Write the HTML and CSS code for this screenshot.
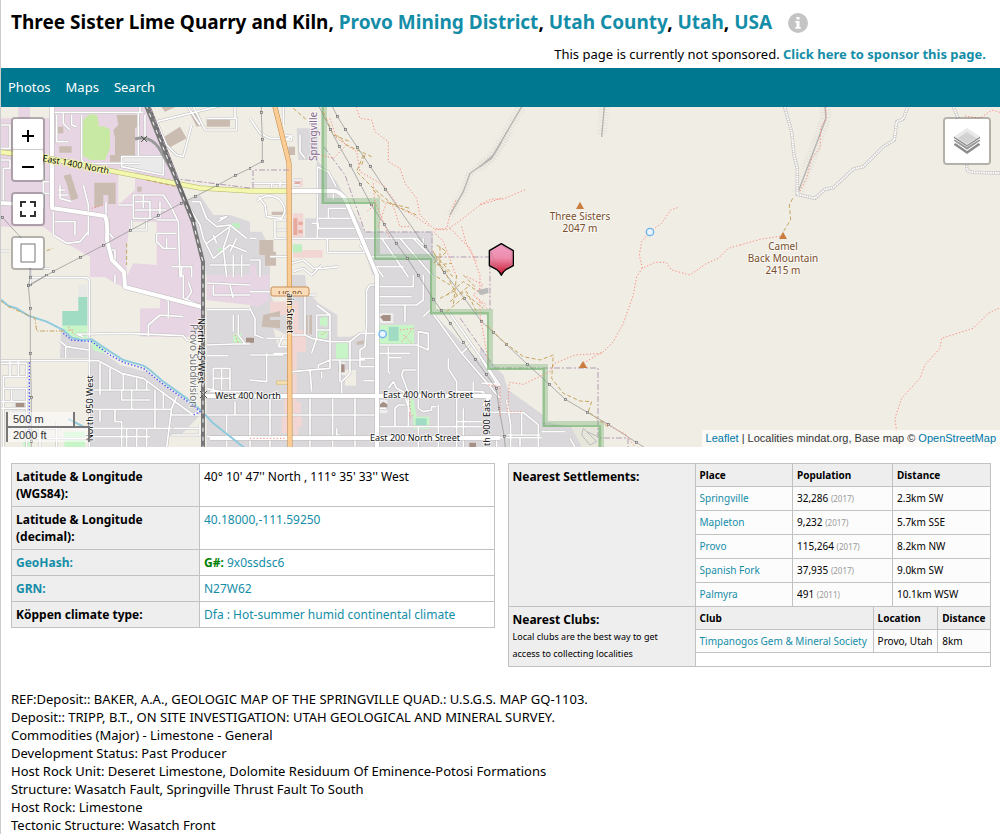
FILE: index.html
```html
<!DOCTYPE html>
<html lang="en">
<head>
<meta charset="utf-8">
<title>Three Sister Lime Quarry and Kiln</title>
<link rel="stylesheet" href="styles.css">
</head>
<body>
<header class="head">
  <div class="title-row">
    <h1 class="title">Three Sister Lime Quarry and Kiln, <a href="#">Provo Mining District</a>, <a href="#">Utah County</a>, <a href="#">Utah</a>, <a href="#">USA</a></h1>
    <button class="info" type="button" aria-label="Information">
      <svg width="20" height="20" viewBox="0 0 20 20"><circle cx="10" cy="10" r="10" fill="#c4c4c4"/><path fill="#fff" d="M8.5 4h3v2.6h-3zM7.3 8h4.2v6h1.2v1.7H7.3V14h1.2V9.7H7.3z"/></svg>
    </button>
  </div>
  <p class="sponsor">This page is currently not sponsored. <a href="#">Click here to sponsor this page.</a></p>
</header>
<nav class="nav"><a href="#">Photos</a><a href="#">Maps</a><a href="#">Search</a></nav>

<section class="map" aria-label="Map">
  <svg class="tiles" viewBox="1 107 999 340" preserveAspectRatio="xMidYMid slice">
    <defs>
      <marker id="tower" markerWidth="8" markerHeight="8" refX="4" refY="4" markerUnits="userSpaceOnUse"><rect x="1" y="1" width="6" height="6" fill="#ddd" stroke="#666" stroke-width="2"/></marker>
      <linearGradient id="pin" x1="0" y1="0" x2="0" y2="1"><stop offset="0" stop-color="#ef9fc6"/><stop offset=".45" stop-color="#ee8cab"/><stop offset="1" stop-color="#c90f28"/></linearGradient>
      <g id="roads">
        <g transform="translate(0 105) scale(.3333)">
          <path d="M155 0V310M160 22H430M420 0V25M470 50L750 -20M470 50L500 120 530 150 550 155 575 60M580 5L615 75H710V40H620M705 0V40M560 0L600 60"/>
          <path d="M190 25V55L210 75M215 30V60L230 65M245 30V165L255 175H420M170 30V110H205M0 60H30V130H0M0 165H30V190H10V300M130 180V310M125 230H150M125 265H150"/>
          <path d="M365 155H490V210L365 185ZM415 22V155M435 30V110"/>
          <path d="M180 240V280L215 290 M175 255H195M175 270H205M250 240L265 300V390M160 320V390L200 415 240 410 265 380M165 350H225V390M318 290V330M355 300H400V340H470M400 340V270H490L510 300 535 350 540 516M470 345H530M395 345V375H440V345M470 385V410L490 430H530M470 385H530M515 485H575V516M545 485V516M500 430V400M405 290H450V340M430 270V310M405 315H500M480 290V340M325 340V380L340 400M325 435H345V470"/>
          <path d="M575 290H600L620 340 650 365 690 360 740 400M620 415L690 365M640 460L690 420 740 440M640 460L610 400 600 360 570 310M690 370L670 430 680 516M710 400L690 440M630 480H750M700 450V516M655 350L680 335 660 340M725 450V516M650 415L640 390"/>
          <path d="M0 295H30M0 438H30M92 490V540M95 490H150"/>
        </g>
        <g transform="translate(250 105) scale(.3333)">
          <path d="M0 40L30 85 60 100 115 100 130 90M150 90V140L165 160M105 90L125 95V105H105M100 0V60M5 235H115M90 230V250M65 235V250M130 225H155M130 240H150M20 290C50 260 100 270 105 320 L95 340 50 335 45 300 25 275M75 345H110M75 345V400H110M80 375H110M0 400H20"/>
          <path d="M202 185V400M202 185L235 200 258 245M250 260V285M205 340H310M235 310V340M235 310H290M185 355H205V370H320M205 400H500L520 420V400M232 400V443M232 443H350M330 420L400 516M395 400L475 516M450 400L550 516M490 400L560 470M340 400H395M360 455H440M370 485H460M125 400H205M125 475L160 465 190 490 220 490 265 485M130 500L160 490 185 510 215 480M60 455H120M0 465L30 465V516"/>
        </g>
        <g transform="translate(0 275) scale(.3333)">
          <path d="M95 8H260L268 15V516M230 177H270L380 175 550 182 560 195 600 205M230 177L250 185M180 198L200 215 265 225M197 215V250M0 257H295L365 295 430 310 580 420M0 265H80V305H10V340H80V380H0M30 260V305M55 260V305M10 340V516M35 345V380M80 380V516M0 400H80"/>
          <path d="M300 265V360M275 345H450M275 403H515M330 280V345M370 295V345M410 310V345M440 320V345M365 345V375H450M395 345V403M300 405V440M275 460H515M345 403V440H365V516M380 460V516M410 460V516M440 460V516M465 345V460M490 350V400M270 485H450M530 365L515 400 500 516M515 420H605M520 460H600M515 480H600V450M580 420L600 405M120 440V516M170 440V516M90 490H260M90 460H180"/>
          <path d="M345 0V25M445 150L480 120 550 125M445 150V185M550 0V70L600 90M490 65L505 80V130M565 20L575 50 555 80M620 24L750 30M640 30V60H750M690 30L700 70 M620 104H750M620 210L705 207H750M620 242H685M620 340L660 350M640 345V280H690V345M665 280V345M640 310H690M620 420H750M680 420V516M700 120V170M715 120V180L735 207M705 380V420M630 350H750M620 485H750"/>
        </g>
        <g transform="translate(250 275) scale(.3333)">
          <path d="M380 0V516M380 30H360L350 45V150L345 215 330 225V275H380M330 250H380M375 35H490V0M380 65H485M385 90H500L520 75V0M465 90V140M520 125L540 105M600 115L750 330H720M545 110L635 235 750 370M635 235L660 210M380 210H500L535 225V175L505 170V400M385 235H480M415 215V290L420 295M415 248H455M340 317H380M300 200L330 175H380M300 200V295L275 320V355M240 200H300M240 200V255L205 270V280M245 255H345M270 255V320M120 180H165L185 190 240 200M165 40V180M165 60H200M200 90L240 120V200M200 120H240M200 120V165H240M200 165V190L185 235M70 235H120M0 240H100M50 235V320L0 315M100 180L85 215 120 215M50 190H120M125 290L240 280V255M180 285L185 350M215 290V310M0 50H60M0 100L15 130V180L40 190"/>
          <path d="M500 285H460L455 300 470 340 480 360M415 340L430 320 440 340 460 350 470 380 480 410M595 250V280L620 320V516M620 350H700L715 370M670 320V350M505 400L520 410 545 405V395H560M435 455V400L445 390H465M380 455H475V360M565 390V516M505 455V516M640 400V516M0 420H380M0 355V516M60 365V516M125 290V516M180 365V516M248 365V516M315 365V516M260 460V480H270M380 400H410M390 455H435M475 455H700M620 440H700"/>
        </g>
        <g transform="translate(480 275) scale(.3333)">
          <path d="M0 245L50 325H5M80 375L92 450V516M30 412H130L175 450V516M125 415V480M82 480H180M30 488H185M185 470H255M270 490L285 516M5 350L20 375V400M120 490V516M50 490V516"/>
        </g>
      </g>
      <g id="mainroads">
        <path d="M52 105V208L105 216 Q108 222 107 240 L112 260 124 272 125 287 202 307M290 191H334Q342 192 346 201L377 275V447M203 396H490L484 406M210 438H500M0 203L18 204"/>
      </g>
    </defs>
    <rect x="0" y="100" width="1000" height="350" fill="#f0ede5"/>

    <g transform="translate(0 105) scale(.3333)">
      <path fill="#e7d5e3" d="M55 0H90V40H160V0H430L530 235 580 350 608 430V516H270V455L190 410 130 365H0V40H55Z"/>
      <path fill="#f0ede5" d="M355 190L405 200V255L355 300ZM390 350H470V480L400 475 380 516V430ZM90 0H150V20H90Z"/>
      <path fill="#dad8da" d="M550 290L600 270 640 330 690 330 750 350V516H620L600 420Z"/>
      <path fill="#c7e9a3" d="M250 45Q270 20 292 32L297 65Q315 60 330 75V130L315 165 270 165 247 150Z"/>
      <path fill="#cbbcb2" d="M350 30H420V60L405 70V155L365 155V170H330V150H345V100L340 75 355 60ZM493 95L540 65 560 100 505 130ZM568 20L590 15 610 60 590 65ZM620 40H690V65H620ZM480 0H540L495 20ZM283 233H347V297H325V270H310V300L283 310ZM190 212L212 207 235 280 213 287 200 235ZM178 124H215V143H178ZM170 65H190V85H170ZM412 245H425V260H412Z"/>
      <path fill="#eaeaea" d="M365 155H490V210L365 185Z"/>
      <path fill="#bfeec0" d="M695 355H720V370H695ZM655 430H667V440H655Z"/>
    </g>
    <g transform="translate(250 105) scale(.3333)">
      <path fill="#dad8da" d="M140 70H205V170L260 230 345 380H548V516H370L330 400H165V340H200V165H145ZM0 380H35L60 430V516H0Z"/>
      <path fill="#f1d6d3" d="M128 325H160V400H128ZM130 435H218V458H130ZM132 220H158V245H132Z"/>
      <path fill="#e7a99e" d="M130 340H142V390H130ZM145 350H158V360H145ZM145 375H158V385H145ZM135 230H150V240H135Z"/>
      <path fill="#bfeec0" d="M128 418H156V442H128Z"/>
      <path fill="#cbbcb2" d="M28 405H70V440H78V482H45V450H28ZM65 320H100V330H65ZM115 125H135V150H115Z"/>
      <path fill="#e7d5e3" d="M0 480H18V516H0Z"/>
    </g>
    <g transform="translate(0 275) scale(.3333)">
      <path fill="#e7d5e3" d="M305 0H605V185H420V100H480V68L380 42 340 22ZM620 0H750V90L620 75Z"/>
      <path fill="#dad8da" d="M620 100H750V525H620ZM183 165L225 190 290 215 360 270 440 290 600 410V420L500 525H270V250H180Z"/>
      <path fill="#f0ede5" d="M510 482H605V525H500Z"/>
      <path fill="#9fdcc3" d="M235 65H262V152H187V108H235Z"/>
      <path fill="#c8f5c8" d="M187 152H262V190H225L190 165ZM270 195L320 225 310 235 280 225ZM193 470H255V525H193ZM700 178L725 175V207H700ZM70 500H90V525H70Z"/>
      <path fill="#e8e8e6" d="M235 30H262V65H235ZM80 262H90V480H80ZM35 345H80V430H35Z"/>
      <path fill="#a69085" d="M47 384H73V399H47ZM738 188H760V202H738Z"/>
    </g>
    <g transform="translate(250 275) scale(.3333)">
      <path fill="#dad8da" d="M0 0H545V110L720 290 760 350V525H0Z"/>
      <path fill="#f0ede5" d="M165 0H375V22L348 40V170L300 185H262V120L205 85 170 45ZM75 100H115V0H60V50ZM70 160L110 180 115 215 85 220ZM285 285H318V332H285Z"/>
      <path fill="#e7d5e3" d="M0 0H60L55 75 25 95 0 90Z"/>
      <path fill="#f1d6d3" d="M60 80H145V165H168V232H140V380H152V430H157V455H145V485H130V525H112V475H95V425H103V350H112V120H60Z"/>
      <path fill="#cbbcb2" d="M40 120L90 108V125H60V135H90V160L35 155ZM165 120H173V178H165ZM178 120H186V178H178ZM320 200L345 195V208L320 210ZM110 235H125V245H110Z"/>
      <path fill="#c8f5c8" d="M388 150H492V212L388 208ZM210 128L232 125V155L210 150ZM205 165H235L230 190H205ZM258 205H294V252H258ZM470 370H490L500 425H538V462H490V430Z"/>
      <path fill="#9fdcc3" d="M416 155H446V198H416ZM497 430H530V452H497Z"/>
      <path fill="#eee" d="M387 115H430V145H387ZM388 375H412V415H388ZM265 262H285V300H265Z"/>
      <path fill="#a69085" d="M390 125L400 120H422V138H400ZM390 388L400 380 412 388V402H390ZM266 268H284V292H266ZM0 188H12V203H0ZM658 503H678V525H658Z"/>
      <path fill="#f7e3b5" stroke="#d8b86a" stroke-width="2" d="M80 318H115V328H80Z"/>
    </g>
    <g transform="translate(480 275) scale(.3333)">
      <path fill="#dad8da" d="M0 210L35 265 70 300 85 345 190 420V440L275 455 310 525H0Z"/>
      <path fill="#e6e6da" d="M275 455H365V525H310Z"/>
    </g>

    <use href="#roads" class="road casing"/>
    <use href="#roads" class="road fill"/>
    <use href="#mainroads" class="main casing"/>
    <use href="#mainroads" class="main fill"/>

    <g transform="translate(0 275) scale(.3333)" fill="none">
      <path class="water" d="M0 72L25 92 50 100 85 122 140 140 190 165 215 188 245 195 275 193 330 230 370 255 430 272 450 285 490 320 560 370 605 408 640 445 735 520M205 432L250 455"/>
      <path stroke="#4a4aff" stroke-width="4" stroke-dasharray="4 6" d="M190 175L215 195 275 200 330 240 370 262 430 280 490 328 550 370 590 400 600 410 580 420M88 262V480"/>
      <path stroke="#c9a15a" stroke-width="3" stroke-dasharray="14 5 4 5" d="M0 76L25 95 60 110 105 130 110 168H195"/>
      <path class="trail" d="M205 155L215 170 225 180M205 165H220M705 180L715 205"/>
    </g>

    <g fill="none">
      <path class="sec case" d="M0 152L43 157 117 172 200 188 250 191H290"/>
      <path class="sec" d="M0 152L43 157 117 172 200 188 250 191H290"/>
      <path class="pri case" d="M274 103L289 163 290 450"/>
      <path class="pri" d="M274 103L289 163 290 450"/>
      <path stroke="#999" stroke-width="3" d="M135 139Q150 135 159 148L176 178"/>
      <path stroke="#777" stroke-width="4" d="M145 103L177 182 193 222 203 262V450"/>
      <path stroke="#666" stroke-width="2" d="M149 105L179 182 195 222"/>
      <path stroke="#fff" stroke-width="1" stroke-dasharray="4 5" d="M146 105L177 182 193 222 203 262V450"/>
      <path stroke="#555" d="M141 136L147 142M147 136L141 142M200 391L207 398M207 391L200 398"/>
    </g>

    <g class="boundary">
      <path d="M150 107L178 179 250 188M253 188V170H290M324 147L345 175 365 232H432V257H490V311M460 318L495 368H598V438H628V450"/>
    </g>
    <path class="park" d="M324 103V201H377V257H433V312H490V367H545V424H601V450"/>
    <path class="park-edge" d="M323 103V203H375V259H431V313H488V369H544V426H600V450"/>

    <g transform="translate(250 105) scale(.3333)">
      <path class="trail" d="M318 5L330 40 365 45 375 80 415 110V170L450 190 465 235 500 280 510 330 550 370 590 375 640 340 690 300 755 280M555 375L590 370 600 330 620 280M240 40L260 100 320 140 330 200 400 240 450 310 490 330 540 365M290 120L250 160 210 150M370 235L375 300 350 320M385 365L410 290 430 305 450 365 480 365M550 380L580 410 620 516M600 370L660 430 690 510M635 365L650 420 680 470M380 300L420 400"/>
      <path class="track" d="M130 10L170 45M220 20L250 90 300 110M340 150L320 200 370 250 430 300 500 330M260 90L290 120 365 155M345 150L335 180M370 255L400 290 480 310M560 420L590 440 550 475M570 425V480L610 516M555 450L600 500M560 480L605 475M580 500L545 430"/>
      <path stroke="#aaa" stroke-width="24" opacity=".22" stroke-dasharray="2 6" fill="none" d="M600 330L640 260 660 205 725 160 780 80"/>
      <path class="cliff" d="M600 330L640 260 660 205 725 160 755 110"/>
      <path class="power" d="M-2 190L37 169 37 103 34 22 34 0M205 0L241 73 268 124 301 181 331 238 364 300 403 358 439 415 472 460 505 511 550 583 574 616 601 655 640 712 676 763 709 808 739 850 747 910 763 995 766 1030M245 0L262 34 286 73 322 127 361 184 406 253 526 424 583 502 643 580 694 649 730 682 769 718 832 778 898 838 946 883 1012 922 1075 958 1159 1012 1195 1035"/>
    </g>
    <g transform="translate(0 105) scale(.3333)">
      <path class="power" d="M0 330L7 337 92 430M92 540L160 499 241 457 310 421 391 376 476 331 544 295 586 274 652 241 706 211 750 190M140 510L85 541M91 450L91 517 85 541 91 610 91 745 94 877 94 1010 94 1040"/>
      <path class="trail" d="M275 310L310 300"/>
      <path class="track" d="M380 415V480M140 437L160 430M440 225L530 245"/>
    </g>
    <g transform="translate(250 275) scale(.3333)">
      <path class="track" d="M590 0L620 60 650 50 680 110M590 60L640 20 700 60M600 80L660 30M620 0L610 90M650 60L700 100M570 70L620 45M640 0L680 40M590 110L650 60M560 5L600 30"/>
      <path class="trail" d="M650 5L700 30 670 60 710 90M690 0V60M680 70L715 105M450 165L490 160 455 200M460 180L485 205M480 370V430L490 420M215 180L230 170M0 490H110M715 330L750 335V430"/>
      <path fill="#bbb" d="M682 45L715 38V55L690 60Z"/>
      <path stroke="#6bb0ee" stroke-width="4" fill="#e9f4ff" d="M387 177a11 11 0 1 0 22 0a11 11 0 1 0 -22 0"/>
    </g>
    <g transform="translate(480 275) scale(.3333)">
      <path class="trail" d="M470 5L460 60 430 145 400 200 365 235 285 240 225 265 210 290 130 328 88 322 82 410 130 410M310 265L365 232M365 440L440 480 465 516M1250 470L1245 430 1265 370 1320 310 1335 270 1380 220 1385 190 1480 160 1525 115 1560 98M0 80V120L25 260"/>
      <path class="track" d="M20 150L70 200 130 245 180 255 220 240 215 310 250 355 300 378 335 380 325 410 390 460"/>
      <path stroke="#bbb" stroke-width="3" fill="none" d="M310 460L350 500 330 510 305 480ZM320 470L355 485"/>
      <path fill="#cb7d3f" d="M309 258L322 279H296Z"/>
    </g>
    <g transform="translate(480 105) scale(.3333)">
      <path stroke="#aaa" stroke-width="30" opacity=".22" stroke-dasharray="2 6" fill="none" d="M0 185L40 150 125 5M373 5L365 92"/>
      <path class="cliff" d="M0 185L40 150 125 5M373 5L365 96"/>
      <path class="trail" d="M0 298L35 282 70 282 140 252M593 308L572 315 545 355 510 380 485 410 478 450 487 490 525 472 558 472 575 495 630 510 680 475 715 460 745 430 780 420M487 490L472 512"/>
      <path stroke="#6bb0ee" stroke-width="4" fill="#e9f4ff" d="M499 381a11 11 0 1 0 22 0a11 11 0 1 0 -22 0"/>
      <path fill="#cb7d3f" d="M300 290L312 312H288Z"/>
      <path fill="url(#pin)" stroke="#000" stroke-width="4" stroke-linejoin="round" d="M64 416L100 437V482L79 493Q69 500 64 511 59 500 49 493L28 482V437Z"/>
      <path fill="none" stroke="#b9718e" stroke-width="2" opacity=".7" d="M64 421L96 439V479L76 489M52 489L32 479V439Z"/>
    </g>
    <g transform="translate(740 105) scale(.3333)" fill="none">
      <path stroke="#aaa" stroke-width="34" opacity=".22" stroke-dasharray="2 6" d="M255 5L258 40 172 268"/>
      <path class="cliff" d="M255 5L258 40 172 268"/>
      <path class="dirt-case" d="M132 0L155 80 162 150 172 190V268L225 280 255 253 280 248 340 192 370 185 430 125 463 105 470 50 490 42 505 0M638 0L655 40M680 175V190Q682 202 700 202L780 204"/>
      <path class="dirt" d="M132 0L155 80 162 150 172 190V268L225 280 255 253 280 248 340 192 370 185 430 125 463 105 470 50 490 42 505 0M638 0L655 40M680 175V190Q682 202 700 202L780 204"/>
      <path class="trail" d="M258 5L258 40 242 70 240 130 215 160 200 220 178 262M675 33L720 40 755 15 780 22M0 420L65 402 128 393"/>
      <path class="track" d="M158 280L148 300 152 345 130 380"/>
      <path fill="#cb7d3f" d="M129 380L141 402H117Z"/>
    </g>

    <g class="label" font-size="9">
      <text class="road-name" transform="translate(42 161) rotate(11)" font-size="9">East 1400 North</text>
      <text x="215" y="399">West 400 North</text>
      <text x="383" y="398">East 400 North Street</text>
      <text x="370" y="441">East 200 North Street</text>
      <text transform="translate(93 441) rotate(-90)">North 950 West</text>
      <text transform="translate(198 318) rotate(90)">North 425 West</text>
      <text class="rail" transform="translate(190 324) rotate(90)" font-size="10">Provo Subdivision</text>
      <text transform="translate(490 446) rotate(-90)">th 900 East</text>
      <text class="town" transform="translate(317 161) rotate(-90)" font-size="10">Springville</text>
    </g>
    <rect x="271" y="287" width="38" height="9" rx="2" fill="#fbdcb8" stroke="#c98d55"/>
    <svg x="271" y="287" width="38" height="7" viewBox="0 0 38 7"><text class="shield" x="19" y="11" text-anchor="middle" font-size="9">US 89</text></svg>
    <g class="label"><text transform="translate(287 293) rotate(90)" font-size="9">ain Street</text></g>
    <g class="label peak" font-size="10" text-anchor="middle">
      <text x="580" y="220">Three Sisters</text><text x="580" y="232">2047 m</text>
      <text x="783" y="250">Camel</text><text x="783" y="262">Back Mountain</text><text x="783" y="274">2415 m</text>
    </g>
  </svg>

  <div class="controls">
    <div class="bar zoom">
      <button type="button" aria-label="Zoom in"><svg width="12" height="12" viewBox="0 0 12 12"><path d="M0 6H12M6 0V12" stroke="#000" stroke-width="2"/></svg></button>
      <button type="button" aria-label="Zoom out"><svg width="12" height="12" viewBox="0 0 12 12"><path d="M0 6H12" stroke="#000" stroke-width="2"/></svg></button>
    </div>
    <div class="bar"><button type="button" aria-label="Full screen"><svg width="16" height="16" viewBox="0 0 16 16"><path d="M1 6V1H6M10 1H15V6M15 10V15H10M6 15H1V10" fill="none" stroke="#333" stroke-width="2"/></svg></button></div>
    <div class="bar"><button type="button" aria-label="Draw area"><svg width="16" height="20" viewBox="0 0 16 20"><rect x="1" y="1" width="14" height="18" fill="#fff" stroke="#777"/></svg></button></div>
  </div>
  <div class="bar layers"><button type="button" aria-label="Layers">
    <svg width="26" height="26" viewBox="0 0 26 26"><path fill="#8c8c8c" d="M0 16L13 9 26 16V17L13 26 0 17Z"/><path fill="#fff" d="M0 12.500L13 21.500 26 12.500V14L13 23 0 14Z"/><path fill="#9b9b9b" d="M0 12L13 5 26 12V13L13 21.500 0 13Z"/><path fill="#fff" d="M0 9L13 17.500 26 9V11L13 19 0 11Z"/><path fill="#777" d="M0 8.500L13 17.500 26 8.500V10L13 18.500 0 10Z"/><path fill="#e9e9e9" d="M13 0L26 8.500 13 17 0 8.500Z"/><path fill="#d2d2d2" d="M13 4L22 10 13 16 4 10Z"/></svg>
  </button></div>
  <div class="scale"><div class="metric">500 m</div><div class="imperial">2000 ft</div></div>
  <div class="credit"><a href="#">Leaflet</a> | Localities mindat.org, Base map © <a href="#">OpenStreetMap</a></div>
</section>

<main class="content">
  <div class="tables">
    <table class="facts">
      <tr><th scope="row">Latitude &amp; Longitude (WGS84):</th><td>40° 10' 47'' North , 111° 35' 33'' West</td></tr>
      <tr><th scope="row">Latitude &amp; Longitude (decimal):</th><td><a href="#">40.18000,-111.59250</a></td></tr>
      <tr><th scope="row"><a href="#">GeoHash:</a></th><td><b class="geo">G#:</b> <a href="#">9x0ssdsc6</a></td></tr>
      <tr><th scope="row"><a href="#">GRN:</a></th><td><a href="#">N27W62</a></td></tr>
      <tr><th scope="row">Köppen climate type:</th><td><a href="#">Dfa : Hot-summer humid continental climate</a></td></tr>
    </table>
    <table class="facts near">
      <tr><th scope="row">Nearest Settlements:</th><td class="nest">
        <table class="inner places">
          <tr><th>Place</th><th>Population</th><th>Distance</th></tr>
          <tr><td><a href="#">Springville</a></td><td>32,286 <small>(2017)</small></td><td>2.3km SW</td></tr>
          <tr><td><a href="#">Mapleton</a></td><td>9,232 <small>(2017)</small></td><td>5.7km SSE</td></tr>
          <tr><td><a href="#">Provo</a></td><td>115,264 <small>(2017)</small></td><td>8.2km NW</td></tr>
          <tr><td><a href="#">Spanish Fork</a></td><td>37,935 <small>(2017)</small></td><td>9.0km SW</td></tr>
          <tr><td><a href="#">Palmyra</a></td><td>491 <small>(2011)</small></td><td>10.1km WSW</td></tr>
        </table></td></tr>
      <tr><th scope="row">Nearest Clubs:<span class="note">Local clubs are the best way to get access to collecting localities</span></th><td class="nest">
        <table class="inner clubs">
          <tr><th>Club</th><th>Location</th><th>Distance</th></tr>
          <tr><td><a href="#">Timpanogos Gem &amp; Mineral Society</a></td><td>Provo, Utah</td><td>8km</td></tr>
        </table></td></tr>
    </table>
  </div>
  <p class="notes">REF:Deposit:: BAKER, A.A., GEOLOGIC MAP OF THE SPRINGVILLE QUAD.: U.S.G.S. MAP GQ-1103.<br>Deposit:: TRIPP, B.T., ON SITE INVESTIGATION: UTAH GEOLOGICAL AND MINERAL SURVEY.<br>Commodities (Major) - Limestone - General<br>Development Status: Past Producer<br>Host Rock Unit: Deseret Limestone, Dolomite Residuum Of Eminence-Potosi Formations<br>Structure: Wasatch Fault, Springville Thrust Fault To South<br>Host Rock: Limestone<br>Tectonic Structure: Wasatch Front</p>
</main>
</body>
</html>
```
FILE: styles.css
```css
* { box-sizing: border-box; }
body {
  margin: 0;
  border-left: 1px solid #ccc;
  background: #fff;
  color: #000;
  font: 13px/18px "Noto Sans", sans-serif;
}
a { color: #148da8; text-decoration: none; }
button { padding: 0; border: 0; background: #fff; cursor: pointer; }

.head { padding: 9px 14px 5px 10px; }
.title-row { display: flex; align-items: center; gap: 16px; }
.title { margin: 0; font-size: 19px; line-height: 27px; font-weight: 700; }
.info { display: flex; background: none; }
.sponsor { margin: 9px 0 0; text-align: right; }
.sponsor a { font-weight: 700; }

.nav {
  display: flex;
  gap: 15px;
  padding: 0 7px;
  background: #00788f;
  line-height: 39px;
}
.nav a { color: #fff; }

.map { position: relative; height: 340px; overflow: hidden; }
.tiles { display: block; width: 100%; height: 100%; }
.road { fill: none; stroke-linejoin: round; }
.road.casing { stroke: #bdbbbb; stroke-width: 8; }
.road.fill { stroke: #fff; stroke-width: 5; }
.main { fill: none; stroke-linejoin: round; }
.main.casing { stroke: #bdbbbb; stroke-width: 5; }
.main.fill { stroke: #fff; stroke-width: 4; }
.water { stroke: #8fcbdc; stroke-width: 6; }
.sec { stroke: #f4f7ae; stroke-width: 4; }
.sec.case { stroke: #b3b36a; stroke-width: 5; }
.pri { stroke: #fbcd95; stroke-width: 4; }
.pri.case { stroke: #bf8440; stroke-width: 5; }
.boundary { fill: none; stroke: #b39bb5; stroke-width: 1; stroke-dasharray: 6 2 2 2; }
.park { fill: none; stroke: #6db069; stroke-width: 6; opacity: .35; }
.park-edge { fill: none; stroke: #6db069; stroke-width: 2; opacity: .5; }
.trail { fill: none; stroke: #f98d80; stroke-width: 3; stroke-dasharray: 4 6; }
.track { fill: none; stroke: #c5a55f; stroke-width: 3; stroke-dasharray: 12 7; }
.cliff { fill: none; stroke: #b5b3b0; stroke-width: 4; }
.power {
  fill: none;
  stroke: #8d8d8d;
  stroke-width: 2;
  marker-mid: url(#tower);
}
.dirt-case { stroke: #c8c6c2; stroke-width: 10; }
.dirt { stroke: #fff; stroke-width: 6; stroke-dasharray: 5 2; }
.label text {
  fill: #111;
  stroke: rgba(255, 255, 255, .6);
  stroke-width: 2px;
  paint-order: stroke;
}
.label .road-name { stroke: #f4f7ae; }
.label .rail { fill: #777; }
.label .town { fill: #8a6a8f; }
.label.peak text { fill: #7a4f2c; }
.shield { fill: #7d4e25; }

.controls {
  position: absolute;
  top: 10px;
  left: 10px;
  display: grid;
  gap: 10px;
}
.bar {
  width: 34px;
  border: 2px solid rgba(0, 0, 0, .25);
  border-radius: 4px;
  background-clip: padding-box;
}
.bar button {
  display: flex;
  align-items: center;
  justify-content: center;
  width: 100%;
  height: 30px;
  border-radius: 2px;
}
.zoom button { padding-top: 4px; }
.zoom button + button { border-top: 1px solid #ccc; height: 31px; }
.layers { position: absolute; top: 10px; right: 9px; width: 48px; }
.layers button { height: 44px; }
.scale {
  position: absolute;
  left: 5px;
  bottom: 5px;
  color: #333;
  font: 11px/14px "Liberation Sans", sans-serif;
}
.scale div {
  border: 2px solid #777;
  padding: 0 5px;
  background: rgba(255, 255, 255, .5);
}
.scale .metric { width: 69px; border-top: 0; }
.scale .imperial { width: 84px; margin-top: -2px; border-bottom: 0; }
.credit {
  position: absolute;
  right: 0;
  bottom: 0;
  padding: 0 4px;
  background: rgba(255, 255, 255, .7);
  color: #333;
  font: 11px/17px "Liberation Sans", sans-serif;
}
.credit a { color: #0078a8; }

.content { padding: 16px 9px 0 10px; }
.tables {
  display: grid;
  grid-template-columns: 1fr 1fr;
  align-items: start;
  gap: 13px;
}
table { border-collapse: collapse; width: 100%; }
th { text-align: left; background: #eee; }
.facts { font-size: 12px; line-height: 17px; table-layout: fixed; }
.facts > tbody > tr > th { width: 188px; }
.facts.near > tbody > tr > th { width: 187px; }
.facts th, .facts td {
  border: 1px solid #c2c2c2;
  padding: 4px;
  vertical-align: top;
}
.facts .nest { padding: 0; }
.near .inner {
  border-style: hidden;
  font-size: 10px;
  line-height: 14px;
}
.near .inner td { background: #fcfcfc; }
.places { table-layout: fixed; }
.facts .places th:nth-child(1) { width: 97px; }
.facts .places th:nth-child(2) { width: 100px; }
.clubs th, .clubs td { white-space: nowrap; }
.near .clubs { border-bottom: 1px solid #c2c2c2; }
small { color: #999; font-size: 8px; }
.geo { color: #008000; }
.note {
  display: block;
  padding-right: 16px;
  font-size: 9px;
  font-weight: 400;
}
.notes { margin: 23px 0 0; }
```
